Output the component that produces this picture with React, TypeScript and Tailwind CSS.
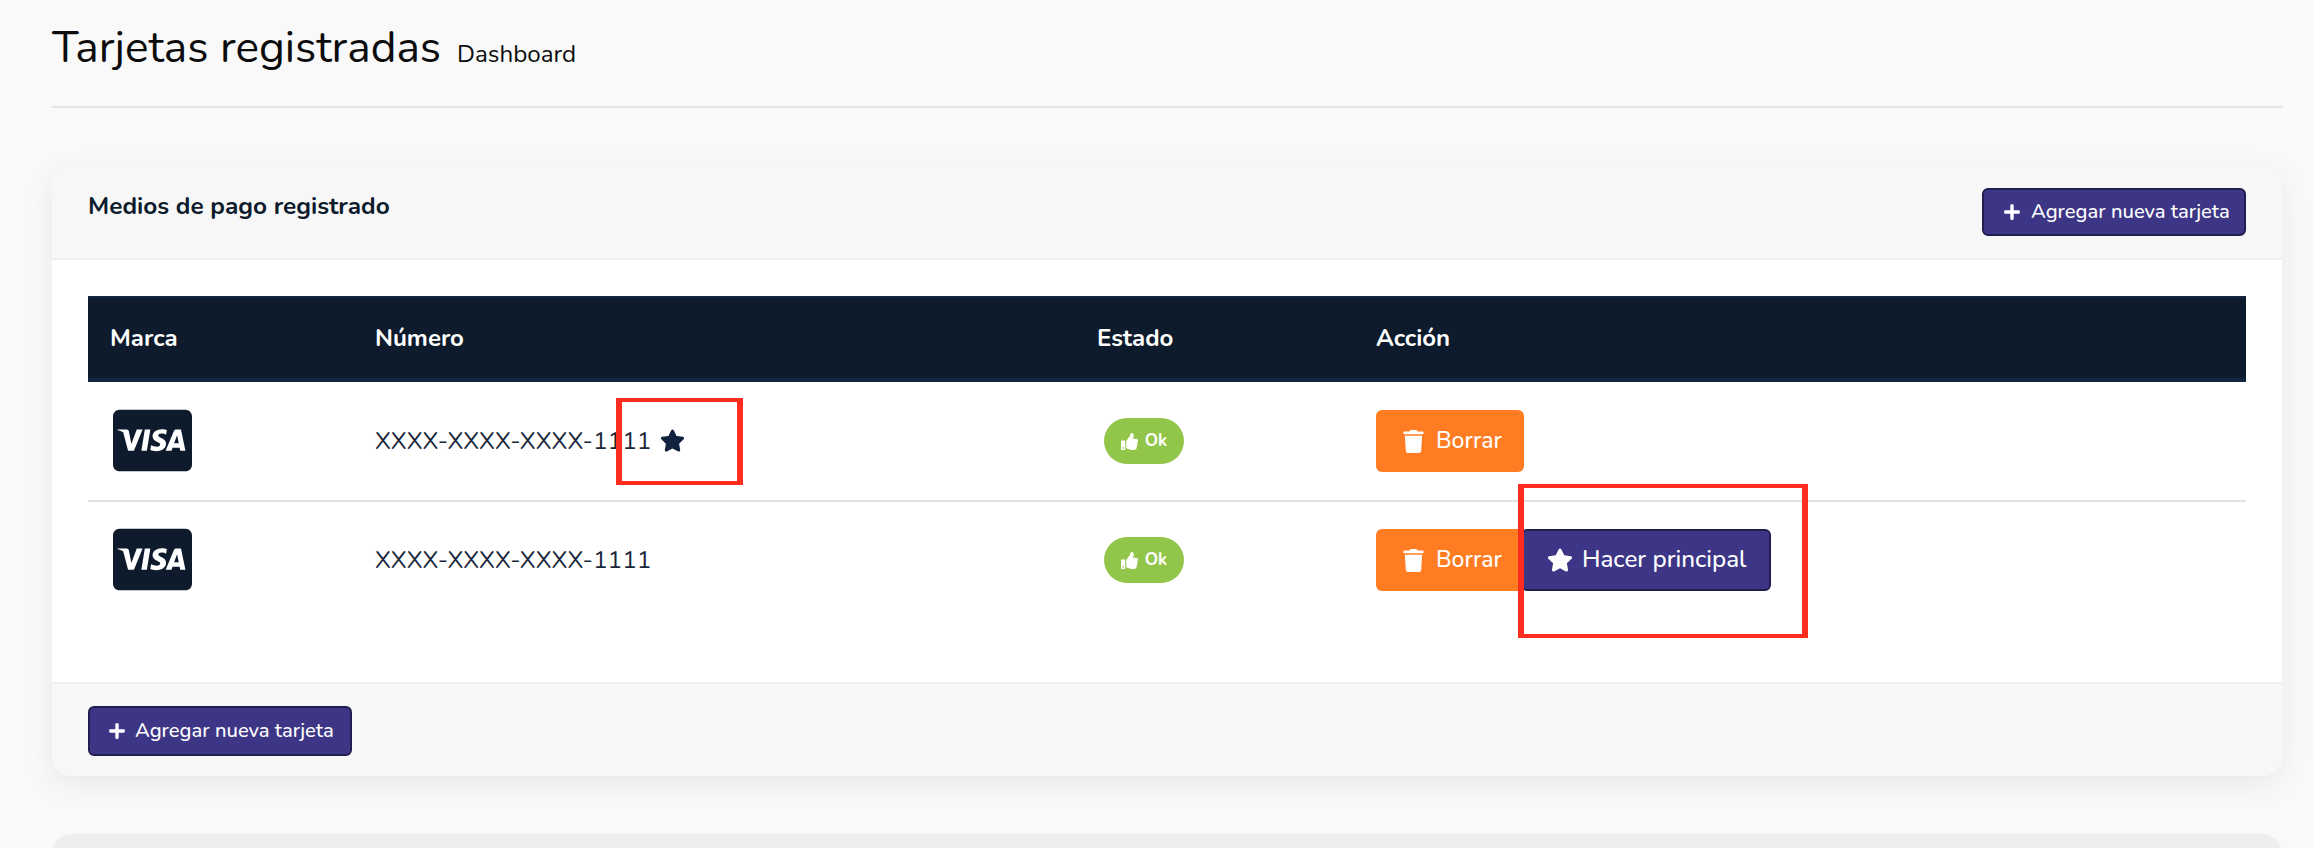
import { FaCcVisa, FaPlus, FaStar, FaThumbsUp, FaTrash } from "react-icons/fa";

const rows = [
  { id: 1, main: true },
  { id: 2, main: false },
];

const AddButton = ({ tall }: { tall?: boolean }) => (
  <button
    className={`flex w-[264px] items-center rounded-[6px] border-2 border-[#221e50] bg-[#3d3585] text-[20.2px] font-medium text-white ${tall ? "h-[50px] pl-[18px]" : "h-[48px] pl-[19px]"}`}
  >
    <FaPlus className={`size-[18px] ${tall ? "mr-[9px]" : "mr-[10px]"}`} />
    Agregar nueva tarjeta
  </button>
);

const App = () => {
  return (
    <div className="relative h-[848px] overflow-hidden bg-[#f9f9f9] pt-[19px] pr-[31px] pl-[52px] font-['Nunito','Lato',sans-serif] text-[#0d1b2c]">
      {/* titulo */}
      <div className="flex h-[89px] items-baseline border-b-2 border-[#e2e4e8]">
        <h1 className="text-[44.2px] leading-[58px] font-normal text-[#0b0b0b]">Tarjetas registradas</h1>
        <span className="ml-[16px] text-[24.2px] text-[#0b0b0b]">Dashboard</span>
      </div>

      <div className="mt-[58px] w-[2230px] overflow-hidden rounded-[20px] bg-white shadow-[0_8px_30px_rgba(0,0,0,0.07)]">
        <div className="flex h-[94px] items-start justify-between border-b-2 border-[#efefef] bg-[#f7f7f7] px-[36px] pt-[22px]">
          <h2 className="pt-[3px] text-[24.4px] leading-[30px] font-bold">Medios de pago registrado</h2>
          <AddButton />
        </div>

        <div className="h-[422px] px-[36px] pt-[36px]">
          <table className="w-full table-fixed border-separate border-spacing-0 text-left">
            <thead>
              <tr className="h-[86px] bg-[#0d1b2c] text-[24px] font-bold text-white">
                <th className="w-[265px] border-t-2 border-b-4 border-t-[#12263f] border-b-[#12263f] pl-[22px]">Marca</th>
                <th className="w-[722px] border-t-2 border-b-4 border-t-[#12263f] border-b-[#12263f] pl-[22px]">Número</th>
                <th className="w-[279px] border-t-2 border-b-4 border-t-[#12263f] border-b-[#12263f] pl-[22px]">Estado</th>
                <th className="border-t-2 border-b-4 border-t-[#12263f] border-b-[#12263f] pl-[22px]">Acción</th>
              </tr>
            </thead>
            <tbody>
              {rows.map((row) => (
                <tr key={row.id} className={row.main ? "h-[120px]" : "h-[116px]"}>
                  <td className={`pl-[25px] ${row.main ? "border-b-2 border-[#dee2e6]" : ""}`}>
                    <FaCcVisa className="size-[79px] -translate-y-px text-[#0d1b2c]" />
                  </td>
                  <td className={`pl-[22px] ${row.main ? "border-b-2 border-[#dee2e6]" : ""}`}>
                    <div className="flex items-center text-[24.4px] text-[#18263a]">
                      XXXX-XXXX-XXXX-1111
                      {row.main && <FaStar className="ml-[9px] size-[25px] text-[#12233f]" />}
                    </div>
                  </td>
                  <td className={`pl-[22px] ${row.main ? "border-b-2 border-[#dee2e6]" : ""}`}>
                    <span className="ml-[7px] inline-flex h-[46px] w-[80px] items-center justify-center rounded-[23px] bg-[#92c64a] text-[17px] font-bold text-white">
                      <FaThumbsUp className="mr-[7px] size-[17px]" />
                      Ok
                    </span>
                  </td>
                  <td className={`pl-[22px] ${row.main ? "border-b-2 border-[#dee2e6]" : ""}`}>
                    <div className="flex items-center">
                      <button className="flex h-[62px] w-[148px] items-center rounded-[6px] bg-[#ff7c22] pl-[26px] text-[23px] font-medium text-white">
                        <FaTrash className="mr-[11px] size-[23px]" />
                        Borrar
                      </button>
                      {!row.main && (
                        <button className="-ml-[3px] flex h-[62px] w-[250px] items-center rounded-[6px] border-2 border-[#221e50] bg-[#3d3585] pl-[24px] text-[24.2px] font-medium text-white">
                          <FaStar className="mr-[9px] size-[26px]" />
                          Hacer principal
                        </button>
                      )}
                    </div>
                  </td>
                </tr>
              ))}
            </tbody>
          </table>
        </div>

        <div className="h-[94px] border-t-2 border-[#efefef] bg-[#f7f7f7] pt-[22px] pl-[36px]">
          <AddButton tall />
        </div>
      </div>

      <div className="mt-[58px] h-[60px] w-[2230px] rounded-t-[20px] bg-[#eeeeee]" />

      {/* marcas rojas */}
      <div className="absolute top-[398px] left-[616px] h-[87px] w-[127px] border-x-[6px] border-y-4 border-[#ff2d20]" />
      <div className="absolute top-[484px] left-[1518px] h-[154px] w-[290px] border-x-[6px] border-y-4 border-[#ff2d20]" />
    </div>
  );
};

export default App;
